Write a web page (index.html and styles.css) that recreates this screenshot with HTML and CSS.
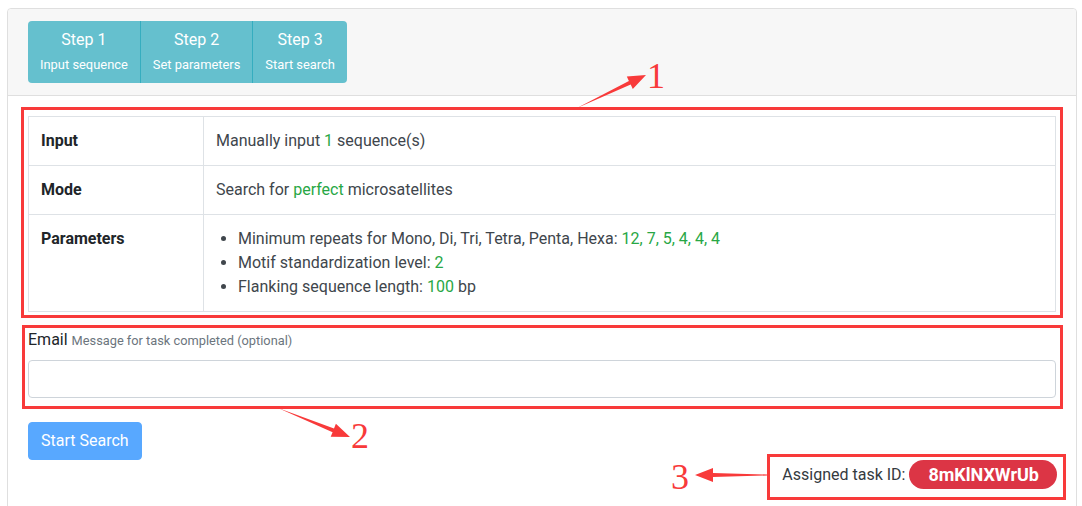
FILE: index.html
```html
<!DOCTYPE html>
<html lang="en">
<head>
<meta charset="utf-8">
<title>Search task</title>
<link rel="stylesheet" href="styles.css">
</head>
<body>
<div class="page">
  <div class="card">
    <div class="card-header">
      <div class="steps">
        <div class="step"><div class="step-title">Step 1</div><div class="step-sub">Input sequence</div></div>
        <div class="step"><div class="step-title">Step 2</div><div class="step-sub">Set parameters</div></div>
        <div class="step"><div class="step-title">Step 3</div><div class="step-sub">Start search</div></div>
      </div>
    </div>
    <div class="card-body">
      <table class="summary">
        <tr>
          <th>Input</th>
          <td>Manually input <span class="hl">1</span> sequence(s)</td>
        </tr>
        <tr>
          <th>Mode</th>
          <td>Search for <span class="hl">perfect</span> microsatellites</td>
        </tr>
        <tr>
          <th>Parameters</th>
          <td>
            <ul class="params">
              <li>Minimum repeats for Mono, Di, Tri, Tetra, Penta, Hexa: <span class="hl">12, 7, 5, 4, 4, 4</span></li>
              <li>Motif standardization level: <span class="hl">2</span></li>
              <li>Flanking sequence length: <span class="hl">100</span> bp</li>
            </ul>
          </td>
        </tr>
      </table>
      <div class="form-group">
        <label class="label" for="email">Email <small class="hint">Message for task completed (optional)</small></label>
        <input class="form-control" id="email" type="email">
      </div>
      <button class="btn-start" type="button">Start Search</button>
      <div class="task-row">
        <span class="task-label">Assigned task ID:</span>
        <span class="badge">8mKlNXWrUb</span>
      </div>
    </div>
  </div>
  <svg class="annotations" width="1082" height="506" viewBox="0 0 1082 506">
    <g fill="none" stroke="#f83a3a" stroke-width="3">
      <rect x="22.5" y="108.5" width="1039" height="208"/>
      <rect x="23.5" y="326.5" width="1038" height="81"/>
      <rect x="768.5" y="455.5" width="296" height="43"/>
    </g>
    <g fill="#f83a3a">
      <polygon points="577,108 630.7,84.6 632.8,89.1 646,75 626.8,76.5 628.9,81"/>
      <polygon points="278,408 332.6,432.2 330.7,436.8 350,437 335.9,423.8 334,428.4"/>
      <polygon points="767,475.5 767,474.5 713,473 713,468 695,475 713,482 713,477"/>
    </g>
    <g class="anno-num" fill="#f83a3a">
      <text x="647" y="88">1</text>
      <text x="351" y="448">2</text>
      <text x="671" y="489">3</text>
    </g>
  </svg>
</div>
</body>
</html>
```

FILE: styles.css
```css
html, body {
  margin: 0;
  padding: 0;
  background: #fff;
}

body {
  font-family: Roboto, "Liberation Sans", Arial, sans-serif;
  font-size: 16px;
  line-height: 1.5;
  color: #212529;
}

.page {
  position: relative;
  width: 1082px;
  height: 506px;
  overflow: hidden;
}

.card {
  margin: 8px 0 0 7px;
  width: 1070px;
  box-sizing: border-box;
  border: 1px solid #dfdfdf;
  border-radius: 4px;
  background: #fff;
}

.card-header {
  background: #f7f7f7;
  border-bottom: 1px solid #dfdfdf;
  padding: 12px 20px;
  border-radius: 4px 4px 0 0;
}

.steps {
  display: inline-flex;
  border-radius: 4px;
  overflow: hidden;
  background: #65c0ce;
}

.step {
  display: flex;
  flex-direction: column;
  align-items: center;
  padding: 7px 12px 8px;
  height: 62px;
  box-sizing: border-box;
  color: #fff;
}

.step + .step {
  border-left: 1px solid #35adbf;
}

.step-title {
  font-size: 16px;
  line-height: 24px;
}

.step-sub {
  font-size: 12.9px;
  line-height: 22px;
  margin-top: 2px;
}

.card-body {
  padding: 20px;
}

.summary {
  width: 100%;
  border-collapse: collapse;
  border: 1px solid #dee2e6;
  margin-bottom: 16px;
}

.summary th,
.summary td {
  border: 1px solid #dee2e6;
  padding: 12px;
  text-align: left;
  vertical-align: top;
  line-height: 24px;
}

.summary th {
  width: 150px;
  font-weight: 700;
  color: #212529;
}

.summary td {
  color: #40464c;
}

.hl {
  color: #28a745;
}

.params {
  margin: 0;
  padding-left: 22px;
}

.form-group {
  margin-bottom: 24px;
}

.label {
  display: block;
  margin-bottom: 8px;
  color: #212529;
}

.hint {
  font-size: 12.8px;
  color: #6c757d;
}

.form-control {
  display: block;
  width: 100%;
  height: 38px;
  box-sizing: border-box;
  border: 1px solid #ced4da;
  border-radius: 4px;
  padding: 6px 12px;
  font: inherit;
  background: #fff;
}

.btn-start {
  display: block;
  font: inherit;
  font-size: 16px;
  line-height: 24px;
  color: #fff;
  background: #007bff;
  border: 1px solid #007bff;
  border-radius: 4px;
  padding: 6px 12px;
  opacity: 0.65;
}

.task-row {
  display: flex;
  justify-content: flex-end;
  align-items: center;
  gap: 4px;
  margin-right: -1px;
}

.task-label {
  color: #343a40;
}

.badge {
  display: inline-flex;
  align-items: center;
  height: 29px;
  padding: 0 18px 0 19px;
  border-radius: 15px;
  background: #dc3545;
  color: #fff;
  font-weight: 700;
  font-size: 18px;
}

.annotations {
  position: absolute;
  left: 0;
  top: 0;
  pointer-events: none;
}

.anno-num {
  font-family: "Liberation Serif", "Times New Roman", serif;
  font-size: 36px;
}
```
